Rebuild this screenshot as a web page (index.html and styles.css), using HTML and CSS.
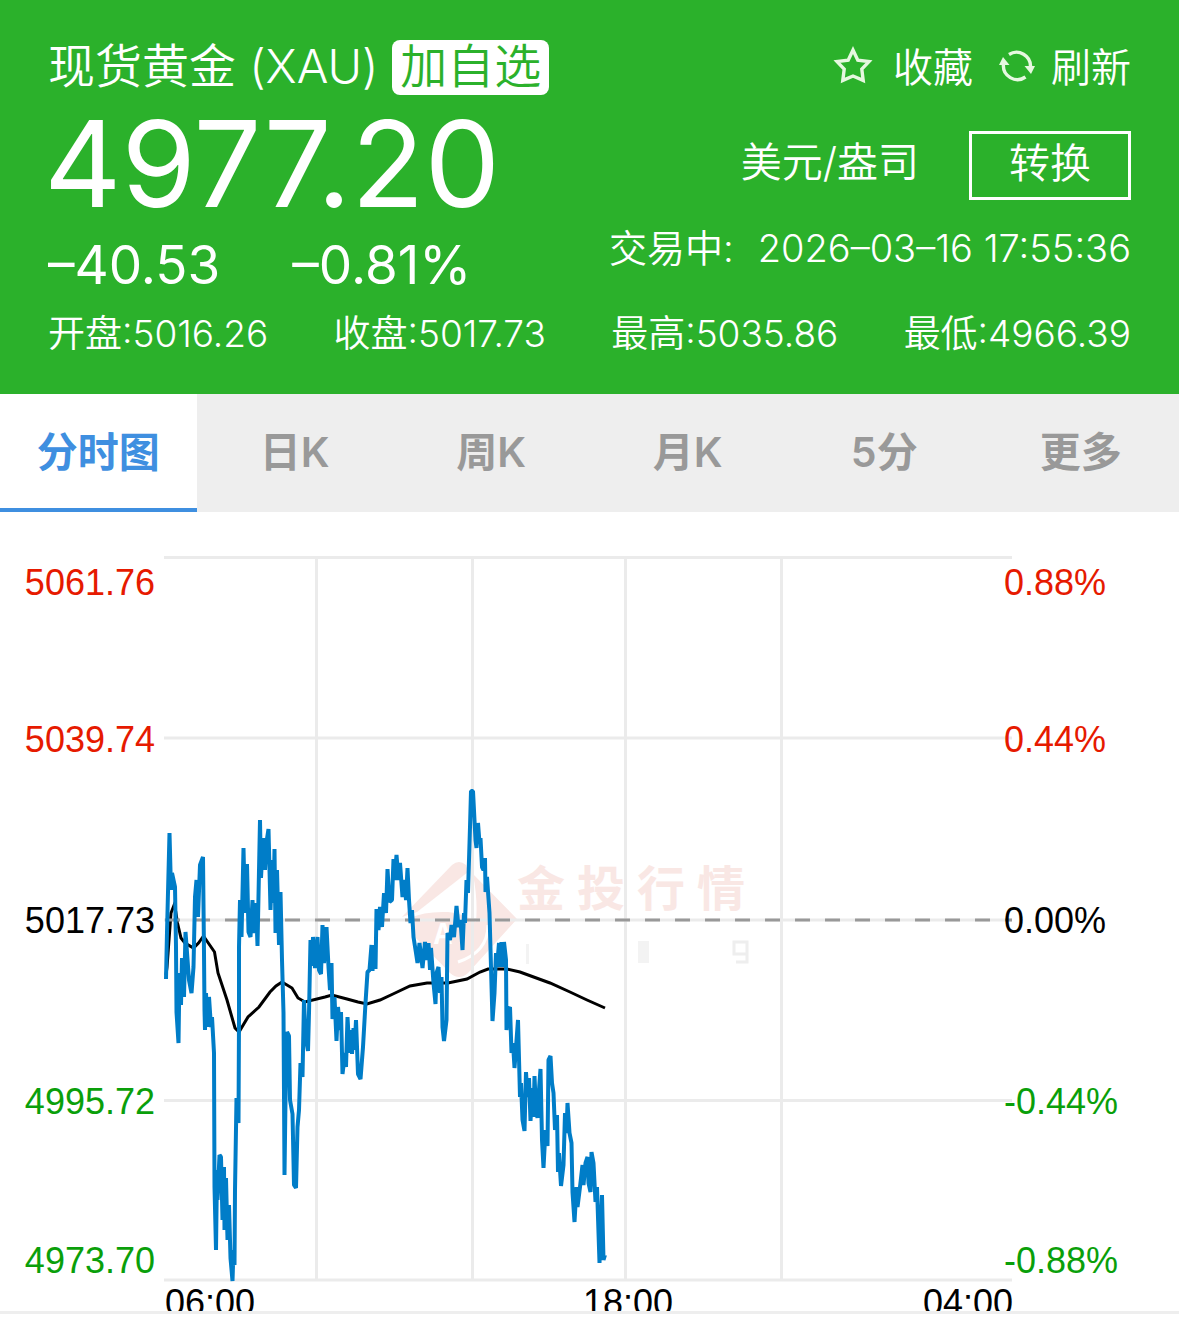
FILE: index.html
```html
<!DOCTYPE html>
<html lang="zh-CN">
<head>
    <meta charset="UTF-8">
    <meta name="viewport" content="width=device-width, initial-scale=1.0">
    <title>现货黄金 (XAU)</title>
    <link rel="stylesheet" href="styles.css">
</head>
<body>
    <header class="quote">
        <div class="quote-main">
            <div class="quote-left">
                <div class="title-row">
                    <h1 class="title">现货黄金 (XAU)</h1>
                    <button class="add-btn">加自选</button>
                </div>
                <div class="price">4977.20</div>
                <div class="change">
                    <span>–40.53</span>
                    <span>–0.81%</span>
                </div>
            </div>
            <div class="quote-right">
                <div class="actions">
                    <a href="#" class="action">
                        <svg class="icon" viewBox="0 0 40 40" fill="none" stroke="#e6f8e0" stroke-width="3.4">
                            <path d="M20 4 L24.8 14.2 L36 15.6 L28.8 23.2 L30.2 34.4 L20 30 L9.8 34.4 L11.2 23.2 L4 15.6 L15.2 14.2 Z"/>
                        </svg>
                        <span>收藏</span>
                    </a>
                    <a href="#" class="action refresh">
                        <svg class="icon" viewBox="0 0 40 40" fill="none" stroke="#e6f8e0" stroke-width="3.4">
                            <path d="M12 8.5 A14 14 0 0 1 33.5 21"/>
                            <path d="M28.5 31 A14 14 0 0 1 6.5 18"/>
                            <path d="M27.5 20 H38 L34 28 Z M2 19 H12.5 L6 11 Z" fill="#e6f8e0" stroke="none"/>
                        </svg>
                        <span>刷新</span>
                    </a>
                </div>
                <div class="unit">
                    <span>美元/盎司</span>
                    <button class="convert-btn">转换</button>
                </div>
                <div class="time">
                    <span>交易中:</span>
                    <span>2026–03–16 17:55:36</span>
                </div>
            </div>
        </div>
        <div class="stats">
            <span>开盘:5016.26</span>
            <span>收盘:5017.73</span>
            <span>最高:5035.86</span>
            <span>最低:4966.39</span>
        </div>
    </header>

    <nav class="tabs">
        <button class="tab active">分时图</button>
        <button class="tab">日K</button>
        <button class="tab">周K</button>
        <button class="tab">月K</button>
        <button class="tab">5分</button>
        <button class="tab">更多</button>
    </nav>

    <main class="chart">
        <svg viewBox="0 512 1179 799">
            <!-- watermark -->
            <g class="watermark">
                <path d="M402 917 L452 865 Q459 859 466 865 L468 872 L417 912 Z"/>
                <path d="M473 874 L517 919 L468 973 Q459 981 450 973 L412 934 L410 918 Q425 911 448 912 Q462 913 476 922 Q478 900 473 874 Z"/>
                <path class="watermark-cut" d="M488 925 Q488 952 458 962"/>
                <text class="watermark-mark" x="434" y="944">A</text>
                <text x="517 577 637 697" y="906">金投行情</text>
            </g>
            <g class="watermark-sub">
                <rect x="526" y="944" width="3" height="20"/>
                <rect x="638" y="941" width="11" height="22"/>
                <path d="M747 954 H734 V942 H747 V962 H736"/>
            </g>

            <!-- grid -->
            <path class="grid" d="M164 557.5 H1012 M164 738 H1012 M164 920 H1012 M164 1100.5 H1012 M164 1280 H1012"/>
            <path class="grid" d="M316.5 557 V1280 M472.5 557 V1280 M625.5 557 V1280 M781.5 557 V1280"/>

            <!-- average -->
            <polyline class="average" points="166,975 167,967 171,913 174.5,904 177.5,923 181,938 185,943 193.5,948 198.5,943 203.5,936 209,944 214.5,952 218,973 227,1000 235,1028 239,1032 248,1017 259,1007 270,992 276,986 282,982 292,988 298,998 305,1002 325,997 332,995 347,999 358,1002 367,1004 380,1000 393,994 410,986 427,983 448,983 467,979 480,972 488,969 507,969 520,972 550,983 570,992 587,1000 605,1008"/>
            <path class="base" d="M165 920 H1012"/>

            <!-- price -->
            <polyline class="line" points="166,979 167,932 169.5,833 171,890 172,873 175,887 176,947 176.5,1012 178.5,1043 179.5,973 181,1005 182,958 184,997 185.5,932 189,980 191.5,993 193.5,967 195,897 196.5,880 198,917 200,865 203,857 204,953 204.5,1010 205,1030 206,993 207.5,1027 209,997 211,1027 212,1017 214,1053 214.5,1187 216,1250 217,1170 217.5,1200 219.5,1155 221,1157 222.5,1220 224,1167 224.5,1230 226,1178 227.5,1240 229,1205 230.5,1258 232.5,1281 233.5,1250 234.5,1265 235,1190 236.5,1098 238.5,1123 239,1020 239,947 240,900 241.5,937 243.5,848 245,913 247,864 248.5,932 250.5,937 252.5,900 254,933 256,903 257.5,946 260,820 261,878 263,838 265,870 266.5,842 268.5,829 270.5,910 272,860 273.5,903 274.5,849 275.5,933 277,870 279,945 280.5,892 282,960 283.5,1013 284.5,1175 285.5,1100 287,1032 289,1036 290,1100 292.5,1114 294,1185 296,1188 297.5,1127 299,1110 300.5,1063 302.5,1077 304,1000 305.5,1036 308,1051 309,1013 310.5,940 312,966 313,937 315,968 317.5,937 319,970 321,974 322.5,925 324,963 326.5,927 328.5,967 330,990 331.5,963 332.5,1019 334.5,997 336.5,1041 338,1007 340,1030 341,1012 342.5,1074 345,1053 346,1067 347.5,1017 349.5,1053 350.5,1030 352,1054 353.5,1028 354.5,1050 356,1020 358,1074 360.5,1079 363,1047 365.5,1003 367.5,972 369.5,970 371.5,945 372.5,971 374,945 375.5,969 376.5,909 378.5,930 380,907 382,927 384,893 386,913 387.5,869 389.5,902 392,900 393.5,859 394.5,880 396.5,855 398.5,880 400,863 402.5,897 404.5,880 406,900 407.5,868 409,900 410.5,923 412,910 413.5,937 416,953 417.5,963 419.5,943 422.5,968 425,942 426.5,960 428.5,943 430,970 431,948 433.5,983 435.5,1004 436.5,973 438.5,967 440,993 441.5,977 442.5,1027 444,1041 446.5,1020 447.5,933 450,940 451.5,925 454,937 456.5,906 458.5,927 460.5,920 462.5,950 464,913 465,923 466.5,880 468,893 470,827 471,791 473,791 475.5,840 476.5,848 478,823 479.5,843 480.5,838 482,867 483.5,870 485,858 485.5,892 487,877 489.5,913 491,967 492.5,1021 494.5,993 496,953 497,967 499,943 500,967 501.5,942 503,967 504,942 506,960 506.5,1030 508,1010 510,1007 511.5,1053 513,1043 514.5,1068 518,1020 520,1097 521,1083 522.5,1120 524.5,1131 526,1072 527.5,1097 529,1078 530.5,1121 532.5,1088 533.5,1117 534.5,1076 536,1110 537.5,1118 539,1090 540.5,1069 542,1140 543.5,1168 545.5,1130 547.5,1146 548.5,1060 550.5,1056 552,1083 553.5,1093 555,1130 557,1115 558,1172 559,1153 561,1186 563.5,1165 565,1113 566.5,1133 567.5,1103 569.5,1133 571.5,1143 572.5,1192 574.5,1222 576.5,1187 577.5,1207 580,1187 582.5,1165 583.5,1185 585.5,1163 587.5,1157 588.5,1183 590.5,1192 591.5,1152 593.5,1163 595.5,1202 597,1187 599.5,1263 602,1195 603.5,1260 605,1255"/>

            <g class="label">
                <g text-anchor="end">
                    <text class="up" x="155" y="595">5061.76</text>
                    <text class="up" x="155" y="752">5039.74</text>
                    <text x="155" y="933">5017.73</text>
                    <text class="down" x="155" y="1114">4995.72</text>
                    <text class="down" x="155" y="1273">4973.70</text>
                </g>
                <text class="up" x="1004" y="595">0.88%</text>
                <text class="up" x="1004" y="752">0.44%</text>
                <text x="1004" y="933">0.00%</text>
                <text class="down" x="1004" y="1114">-0.44%</text>
                <text class="down" x="1004" y="1273">-0.88%</text>
                <text x="165" y="1315">06:00</text>
                <text x="628" y="1315" text-anchor="middle">18:00</text>
                <text x="1013" y="1315" text-anchor="end">04:00</text>
            </g>
        </svg>
    </main>
</body>
</html>
```

FILE: styles.css
```css
* {
    box-sizing: border-box;
}
body {
    margin: 0;
    font-family: Inter, "Noto Sans CJK SC", sans-serif;
    background-color: #fff;
}
button {
    margin: 0;
    border: none;
    font-family: inherit;
    cursor: pointer;
}
.quote {
    padding: 40px 48px 28px;
    background-color: #2bb12b;
    color: #fff;
    font-weight: 350;
}
.quote-main {
    display: flex;
    justify-content: space-between;
}
.title-row {
    display: flex;
    gap: 14px;
    height: 55px;
}
.title {
    margin: 0;
    font-size: 47px;
    font-weight: 350;
    line-height: 51px;
    white-space: nowrap;
}
.add-btn {
    height: 55px;
    padding: 0 8px 4px;
    border-radius: 8px;
    background-color: #fff;
    color: #2bb12b;
    font-size: 47px;
    font-weight: 350;
    line-height: 51px;
}
.price {
    margin-left: -4px;
    font-size: 120px;
    font-weight: 400;
    line-height: 138px;
}
.change {
    display: flex;
    gap: 72px;
    font-size: 53px;
    font-weight: 400;
    line-height: 64px;
}
.quote-right {
    display: flex;
    flex-direction: column;
    align-items: flex-end;
    white-space: nowrap;
}
.actions {
    display: flex;
    gap: 24px;
    height: 55px;
    font-size: 40px;
    line-height: 55px;
}
.action {
    display: flex;
    align-items: center;
    gap: 20px;
    color: #fff;
    text-decoration: none;
}
.refresh {
    gap: 14px;
}
.icon {
    width: 40px;
    height: 40px;
    margin-bottom: 4px;
}
.unit {
    display: flex;
    gap: 50px;
    margin-top: 36px;
    font-size: 41px;
    line-height: 63px;
}
.convert-btn {
    height: 69px;
    padding: 0 37px 6px;
    border: 3px solid #fff;
    background: none;
    color: #fff;
    font-size: 41px;
    font-weight: 350;
    line-height: 56px;
}
.time {
    display: flex;
    gap: 24px;
    font-size: 38px;
    line-height: 96px;
}
.stats {
    display: flex;
    justify-content: space-between;
    margin-top: 5px;
    font-size: 37px;
    line-height: 64px;
    white-space: nowrap;
}
.tabs {
    display: flex;
    background-color: #eee;
}
.tab {
    flex: 1;
    height: 118px;
    padding: 0 0 4px;
    border-bottom: 4px solid transparent;
    background: none;
    color: #999;
    font-size: 41px;
    font-weight: 600;
}
.tab.active {
    border-bottom-color: #3f8fe0;
    background-color: #fff;
    color: #3f8fe0;
}
.chart {
    border-bottom: 3px solid #eee;
}
.chart svg {
    display: block;
    width: 100%;
}
.grid {
    fill: none;
    stroke: #ebebeb;
    stroke-width: 3;
}
.base {
    stroke: #999;
    stroke-width: 3;
    stroke-dasharray: 15;
}
.average,
.line {
    fill: none;
    stroke: #000;
    stroke-width: 3;
}
.line {
    stroke: #007dc8;
    stroke-width: 4;
    stroke-linejoin: bevel;
}
.watermark {
    fill: #f9e7e4;
    font-family: "Noto Sans CJK SC", sans-serif;
    font-size: 48px;
    font-weight: 700;
}
.watermark-cut {
    fill: none;
    stroke: #fff;
    stroke-width: 3;
}
.watermark-mark {
    fill: #fff;
    font-size: 28px;
}
.watermark-sub {
    fill: #f3f3f3;
}
.watermark-sub path {
    fill: none;
    stroke: #eee;
    stroke-width: 3;
}
.label {
    fill: #000;
    font-family: "Liberation Sans", sans-serif;
    font-size: 36px;
}
.up {
    fill: #e61a00;
}
.down {
    fill: #0a9f0a;
}
```
